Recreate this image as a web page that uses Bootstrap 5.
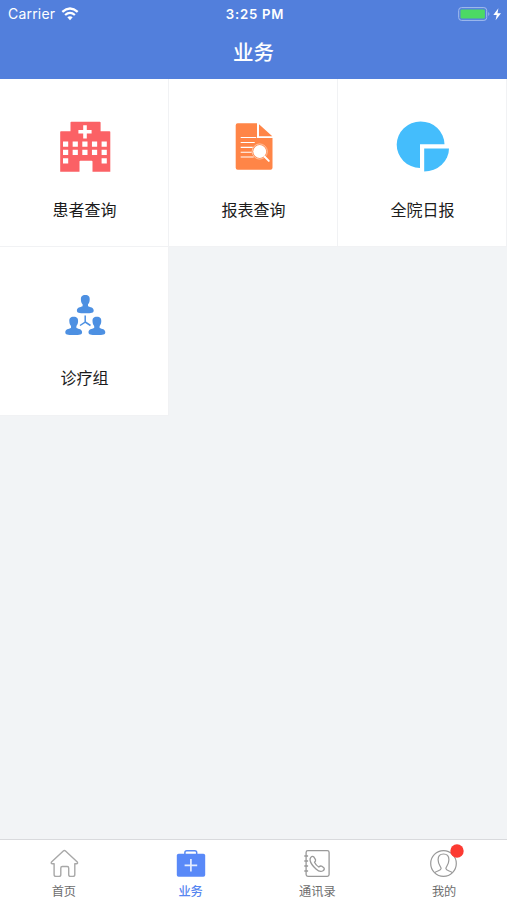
<!DOCTYPE html>
<html lang="zh-CN">
<head>
<meta charset="utf-8">
<meta name="viewport" content="width=device-width, initial-scale=1">
<title>业务</title>
<link rel="stylesheet" href="https://cdn.jsdelivr.net/npm/bootstrap@5.3.0/dist/css/bootstrap.min.css">
<style>
  body { background: #f2f4f6; font-family: Inter, "Noto Sans CJK SC", sans-serif; color: #1c1c1c; }
  .app-top { background: #527fdc; height: 79px; }
  .status-bar { height: 28px; padding: 0 5px 0 8px; font-size: 13.2px; line-height: 28px; }
  .status-bar .carrier { font-size: 14px; letter-spacing: .2px; margin-right: 6px; }
  .status-bar .clock { font-weight: 600; letter-spacing: .75px; }
  .page-title { font-size: 20.5px; line-height: 50px; font-weight: 500; margin: 0; }
  .tile { height: 168.3px; background: #fff; border-right: 1px solid #f1f2f4; border-bottom: 1px solid #f1f2f4; }
  .tile svg { margin: 38px 0 0 1px; }
  .tile-label { font-size: 16px; line-height: 24px; margin: 20.500px 0 0 1px; }
  .tab-bar { height: 61px; background: #fff; border-top: 1px solid #d9dadd; }
  .tab-item { color: #6d6d6d; font-size: 12.2px; line-height: 18px; padding: 7px 0 0 1px; }
  .tab-item.active { color: #5686f0; font-weight: 500; }
  .tab-item span { margin-top: 2px; }
  svg { display: block; flex: none; }
</style>
<script src="https://cdn.jsdelivr.net/npm/bootstrap@5.3.0/dist/js/bootstrap.bundle.min.js"></script>
</head>
<body>
<div class="d-flex flex-column vh-100 overflow-hidden">
  <header class="app-top text-white flex-shrink-0">
    <div class="status-bar row g-0 align-items-center">
      <div class="col d-flex align-items-center">
        <span class="carrier">Carrier</span>
        <svg width="18" height="14" viewBox="0 0 18 14" fill="none" stroke="#fff" stroke-width="2.3">
          <path d="M1.300 4.900Q9-1.800 16.700 4.900M4.100 8Q9 3.700 13.900 8"/>
          <path d="M6.300 10.300Q9 8 11.700 10.300L9 13.200Z" fill="#fff" stroke="none"/>
        </svg>
      </div>
      <div class="col-auto clock">3:25 PM</div>
      <div class="col d-flex justify-content-end">
        <svg width="44" height="16" viewBox="0 0 44 16">
          <rect x=".7" y="1.6" width="28" height="12.8" rx="2.8" fill="none" stroke="#a4bded"/>
          <rect x="2.5" y="3.4" width="24.4" height="9.2" rx="1.4" fill="#4cd964"/>
          <path d="M30.3 6q2.2 2 0 4z" fill="#a4bded"/>
          <path d="M40.4 2.2 35.3 9h3.4l-1.1 5.2L43 7.2h-3.5z" fill="#fff"/>
        </svg>
      </div>
    </div>
    <h1 class="page-title text-center">业务</h1>
  </header>

  <main class="flex-grow-1">
    <div class="row row-cols-3 g-0">
      <div class="col tile d-flex flex-column align-items-center">
        <svg width="60" height="60" viewBox="55.500 117 60 60">
          <path fill="#fb6165" fill-rule="evenodd" d="M61.500 131.300H71V122.500q0-.8.8-.8H100.300q.8 0 .8.8V131.300H110q.8 0 .8.8V171.700H93V161.500q0-.8-.8-.8H80.800q-.8 0-.8.8V171.700H60.700V132.100q0-.8.8-.8Z"/>
          <path stroke="#fff" stroke-width="3.600" d="M85.500 125.200v13.200M78.900 131.800h13.200"/>
          <path stroke="#fff" stroke-width="5.200" stroke-dasharray="5.200 4.450" d="M63.500 144.200h44.500M63.500 152.300h44.500"/>
          <path stroke="#fff" stroke-width="5.200" d="M63.500 160.800h5.200M102.100 160.800h5.200"/>
        </svg>
        <div class="tile-label">患者查询</div>
      </div>
      <div class="col tile d-flex flex-column align-items-center">
        <svg width="60" height="60" viewBox="224 117 60 60">
          <path fill="#ff8547" d="M237.700 123.300H257V138H272.500V167.700q0 2-2 2H237.700q-2 0-2-2V125.300q0-2 2-2ZM259 124.300 272.300 136.200H259Z"/>
          <path fill="none" stroke="#fff" stroke-width="1.100" d="M240.700 137.500h15.500M240.700 142.500h14M240.700 147.400h12M240.700 152.200h11M240.700 157h13"/>
          <circle cx="259.700" cy="151.500" r="7.600" fill="none" stroke="#ffd0b8" stroke-width=".8"/>
          <circle cx="259.700" cy="151.500" r="6.500" fill="#fff"/>
          <path stroke="#fff" stroke-width="1.900" stroke-linecap="round" d="m264.500 156.500 4.300 4.400"/>
        </svg>
        <div class="tile-label">报表查询</div>
      </div>
      <div class="col tile d-flex flex-column align-items-center">
        <svg width="60" height="60" viewBox="392.500 117 60 60" fill="#44bdfc">
          <path d="M419.500 144.300H444A23.900 23.300 0 1 0 419.500 168Z"/>
          <path d="M423.700 148.500H448.500A24.800 23.200 0 0 1 423.700 171.600Z"/>
        </svg>
        <div class="tile-label">全院日报</div>
      </div>
      <div class="col tile d-flex flex-column align-items-center">
        <svg width="60" height="60" viewBox="54.500 285.300 60 60" fill="#4d90e2">
          <defs>
            <path id="person" d="M0 0C3.300 0 4.500 1.800 4.400 4.400 4.300 7 3.700 8.200 2.700 9.300V11.200C5 12.200 8.400 12.300 8.400 15.600 8.400 18.100 6.500 18.300 0 18.300S-8.400 18.100-8.400 15.600C-8.400 12.300-5 12.200-2.700 11.200V9.300C-3.700 8.200-4.300 7-4.400 4.400-4.500 1.800-3.300 0 0 0Z"/>
          </defs>
          <use href="#person" x="84.800" y="295.300"/>
          <use href="#person" x="73.200" y="317"/>
          <use href="#person" x="96.400" y="317"/>
          <path fill="none" stroke="#4d90e2" stroke-width="1.500" d="M84.700 315.700V322.300L79.500 325.800M84.700 322.300 90 325.800"/>
        </svg>
        <div class="tile-label">诊疗组</div>
      </div>
    </div>
  </main>

  <nav class="tab-bar row g-0 flex-shrink-0">
    <div class="col tab-item d-flex flex-column align-items-center">
      <svg width="34" height="34" viewBox="47 847 34 34" fill="none" stroke="#a8a8a8" stroke-width="1.400" stroke-linejoin="round">
        <path d="M63.300 850.900q1.100-1 2.200 0L77.300 862q.9 1.700-1 1.700H74.800V874.500q0 1.900-1.900 1.900H70.500q-1.800 0-1.800-1.900V868q0-1.500-1.500-1.500H62.300q-1.500 0-1.500 1.500V874.500q0 1.900-1.800 1.900H56q-1.900 0-1.900-1.900V863.700H52.500q-1.900 0-1-1.700Z"/>
      </svg>
      <span>首页</span>
    </div>
    <div class="col tab-item active d-flex flex-column align-items-center">
      <svg width="34" height="34" viewBox="173.700 847 34 34">
        <path d="M184.600 855V852.600q0-1.900 1.900-1.900H194.500q1.900 0 1.900 1.900V855" fill="none" stroke="#5989f3" stroke-width="1.500"/>
        <rect x="176.500" y="853.800" width="28.400" height="23" rx="1.800" fill="#5989f8"/>
        <path d="M190.600 859v12.600M184.300 865.300h12.600" stroke="#e4edff" stroke-width="1.700"/>
      </svg>
      <span>业务</span>
    </div>
    <div class="col tab-item d-flex flex-column align-items-center">
      <svg width="34" height="34" viewBox="300.500 847 34 34" fill="none" stroke="#999" stroke-width="1.300">
        <rect x="306.600" y="850.700" width="23" height="25.700" rx="1.800"/>
        <path d="M304.800 856h3.800M304.800 861h3.800M304.800 866h3.800M304.800 871h3.800"/>
        <path stroke-linejoin="round" d="M311.300 857.400Q313 855.600 314.600 857.300L316 859.600Q316.500 861 315 862.300 316.500 865.500 319.300 867 321 865.500 322.400 866.300L324.300 867.800Q325.600 869.200 323.500 870.700 320.500 872.600 316.500 869 311.600 864.700 310.600 860.500 310.300 858.600 311.300 857.400Z"/>
      </svg>
      <span>通讯录</span>
    </div>
    <div class="col tab-item d-flex flex-column align-items-center">
      <div class="position-relative">
        <svg width="34" height="34" viewBox="427.100 847 34 34" fill="none" stroke="#999" stroke-width="1.200">
          <circle cx="443.600" cy="863.500" r="12.800"/>
          <path d="M434.800 872.700C436.300 870.700 440.700 871 441.200 868.600 441.400 866.700 438.200 865 438.200 859.800 438.200 856 440.300 854 443.600 854S449 856 449 859.800C449 865 445.800 866.700 446 868.600 446.500 871 450.900 870.700 452.400 872.700"/>
        </svg>
        <svg class="position-absolute" style="left:23px;top:-3.500px" width="14" height="14" viewBox="0 0 14 14"><circle cx="7" cy="7" r="6.700" fill="#fc3a32"/></svg>
      </div>
      <span>我的</span>
    </div>
  </nav>
</div>
</body>
</html>
